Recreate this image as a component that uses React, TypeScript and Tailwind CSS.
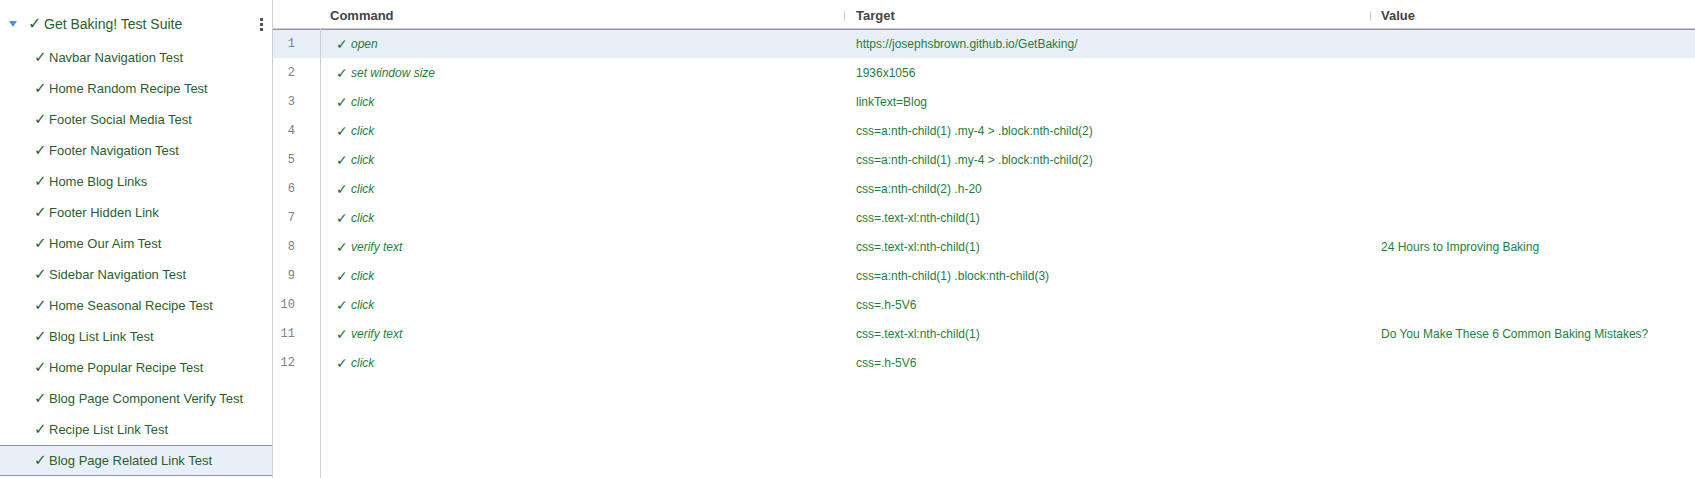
import React from 'react';

type Linha = {
    comando: string;
    alvo: string;
    valor?: string;
};

const testes: string[] = [
    'Navbar Navigation Test',
    'Home Random Recipe Test',
    'Footer Social Media Test',
    'Footer Navigation Test',
    'Home Blog Links',
    'Footer Hidden Link',
    'Home Our Aim Test',
    'Sidebar Navigation Test',
    'Home Seasonal Recipe Test',
    'Blog List Link Test',
    'Home Popular Recipe Test',
    'Blog Page Component Verify Test',
    'Recipe List Link Test',
    'Blog Page Related Link Test'
];

const linhas: Linha[] = [
    { comando: 'open', alvo: 'https://josephsbrown.github.io/GetBaking/' },
    { comando: 'set window size', alvo: '1936x1056' },
    { comando: 'click', alvo: 'linkText=Blog' },
    { comando: 'click', alvo: 'css=a:nth-child(1) .my-4 > .block:nth-child(2)' },
    { comando: 'click', alvo: 'css=a:nth-child(1) .my-4 > .block:nth-child(2)' },
    { comando: 'click', alvo: 'css=a:nth-child(2) .h-20' },
    { comando: 'click', alvo: 'css=.text-xl:nth-child(1)' },
    { comando: 'verify text', alvo: 'css=.text-xl:nth-child(1)', valor: '24 Hours to Improving Baking' },
    { comando: 'click', alvo: 'css=a:nth-child(1) .block:nth-child(3)' },
    { comando: 'click', alvo: 'css=.h-5V6' },
    { comando: 'verify text', alvo: 'css=.text-xl:nth-child(1)', valor: 'Do You Make These 6 Common Baking Mistakes?' },
    { comando: 'click', alvo: 'css=.h-5V6' }
];

function BarraLateral() {
    return (
        <div className="w-[273px] shrink-0 border-r border-[#cfcfcf] overflow-hidden font-['Liberation_Sans',Arial,sans-serif]">
            <div className="h-[42px] pt-[6px] flex items-center pl-[9px] pr-[9px] text-[14px] text-[#285f30]">
                <span className="w-0 h-0 border-l-[4px] border-r-[4px] border-t-[6px] border-l-transparent border-r-transparent border-t-[#4a8fe8]"></span>
                <span className="ml-[11px] flex items-center flex-1">
                    <span className="w-[16px] inline-block shrink-0 font-['DejaVu_Sans',sans-serif] text-[16px] leading-none">✓</span>
                    Get Baking! Test Suite
                </span>
                <span className="flex flex-col gap-[2px]">
                    <span className="w-[3px] h-[3px] bg-[#555]"></span>
                    <span className="w-[3px] h-[3px] bg-[#555]"></span>
                    <span className="w-[3px] h-[3px] bg-[#555]"></span>
                </span>
            </div>
            {testes.map((nome, i) => {
                const selecionado = i === testes.length - 1;
                return (
                    <div
                        key={nome}
                        className={
                            selecionado
                                ? 'h-[31px] flex items-center pl-[34px] text-[13px] text-[#285f30] bg-[#e8eff7] border-y border-[#5b9bf0]'
                                : 'h-[31px] flex items-center pl-[34px] text-[13px] text-[#285f30]'
                        }
                    >
                        <span className="w-[15px] inline-block shrink-0 font-['DejaVu_Sans',sans-serif] text-[15px] leading-none">✓</span>
                        {nome}
                    </div>
                );
            })}
        </div>
    );
}

function Tabela() {
    return (
        <div className="flex-1 flex flex-col font-['Liberation_Sans',Arial,sans-serif] min-w-0">
            <div className="h-[29px] shrink-0 pt-[3px] flex items-center border-b border-[#cdcdcd] text-[13px] font-bold text-[#444]">
                <div className="w-[48px] shrink-0"></div>
                <div className="w-[523px] shrink-0 pl-[9px]">Command</div>
                <div className="w-[526px] shrink-0 flex items-center">
                    <span className="w-px h-[10px] bg-[#cfcfcf]"></span>
                    <span className="ml-[11px]">Target</span>
                </div>
                <div className="flex-1 flex items-center">
                    <span className="w-px h-[10px] bg-[#cfcfcf]"></span>
                    <span className="ml-[10px]">Value</span>
                </div>
            </div>
            <div className="flex-1 relative">
                <div className="absolute left-[47px] top-0 bottom-0 w-px bg-[#cfcfcf]"></div>
                {linhas.map((linha, i) => (
                    <div
                        key={i}
                        className={
                            i === 0
                                ? 'h-[29px] flex items-center bg-[#e8eff7] border-t border-[#5b9bf0] text-[12px] text-[#1d7f3a]'
                                : 'h-[29px] flex items-center text-[12px] text-[#1d7f3a]'
                        }
                    >
                        <div className="w-[48px] shrink-0 pr-[26px] text-right font-['Liberation_Mono',monospace] text-[12px] text-[#808080]">
                            {i + 1}
                        </div>
                        <div className="w-[523px] shrink-0 pl-[15px] flex items-center italic">
                            <span className="w-[15px] inline-block shrink-0 font-['DejaVu_Sans',sans-serif] not-italic text-[14px] leading-none text-[#1a6f33]">✓</span>
                            {linha.comando}
                        </div>
                        <div className="w-[526px] shrink-0 pl-[12px]">{linha.alvo}</div>
                        <div className="flex-1 pl-[11px]">{linha.valor}</div>
                    </div>
                ))}
            </div>
        </div>
    );
}

function App() {
    return (
        <div className="w-[1695px] h-[478px] flex bg-white overflow-hidden">
            <BarraLateral />
            <Tabela />
        </div>
    );
}

export default App;
